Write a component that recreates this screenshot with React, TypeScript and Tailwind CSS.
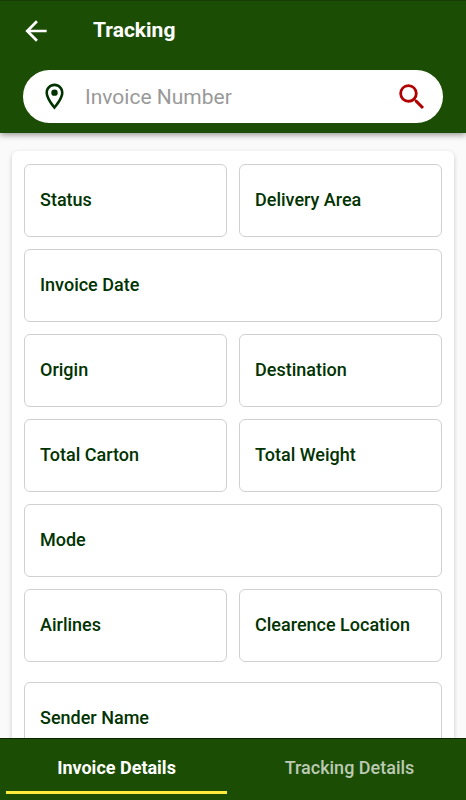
import { useState } from "react";
import { MdArrowBack, MdOutlineLocationOn, MdSearch } from "react-icons/md";

type FieldProps = {
  id: string;
  label: string;
  wide?: boolean;
};

const shipmentFields: FieldProps[] = [
  { id: "status", label: "Status" },
  { id: "delivery-area", label: "Delivery Area" },
  { id: "invoice-date", label: "Invoice Date", wide: true },
  { id: "origin", label: "Origin" },
  { id: "destination", label: "Destination" },
  { id: "total-carton", label: "Total Carton" },
  { id: "total-weight", label: "Total Weight" },
  { id: "mode", label: "Mode", wide: true },
  { id: "airlines", label: "Airlines" },
  { id: "clearence-location", label: "Clearence Location" },
];

const senderFields: FieldProps[] = [
  { id: "sender-name", label: "Sender Name", wide: true },
];

const tabs = ["Invoice Details", "Tracking Details"];

const Field = ({ id, label, wide }: FieldProps) => (
  <div
    className={`flex h-[73px] items-center rounded-md border border-[#d0d0d0] px-[15px] pb-0.5 ${
      wide ? "col-span-2" : ""
    }`}
  >
    <label
      htmlFor={id}
      className="whitespace-nowrap text-lg font-medium text-[#003300]"
    >
      {label}
    </label>
    <input
      id={id}
      type="text"
      readOnly
      className="h-full w-0 min-w-0 flex-1 bg-transparent pl-2 outline-none"
    />
  </div>
);

const App = () => {
  const [activeTab, setActiveTab] = useState(tabs[0]);

  return (
    <div className="flex h-screen flex-col bg-[#fafafa] font-[Roboto,sans-serif]">
      {/* Header */}
      <header className="z-10 border-t border-[#173c05] bg-[#1c4d04] pb-2.5 shadow-[0_2px_6px_rgba(0,0,0,0.4)]">
        <div className="flex h-[60px] items-center px-5">
          <button type="button" aria-label="Back" className="text-white">
            <MdArrowBack size={32} />
          </button>
          <h1 className="ml-[41px] text-[21px] font-bold text-white">
            Tracking
          </h1>
        </div>
        <form
          role="search"
          onSubmit={(e) => e.preventDefault()}
          className="mx-[23px] mt-[9px] flex h-[53px] items-center rounded-full bg-white pl-4 pr-3.5"
        >
          <MdOutlineLocationOn size={31} className="shrink-0 text-[#003300]" />
          <input
            type="text"
            aria-label="Invoice Number"
            placeholder="Invoice Number"
            className="ml-[15px] min-w-0 flex-1 bg-transparent pt-0.5 text-[21px] text-gray-800 outline-none placeholder:text-[#999999]"
          />
          <button
            type="submit"
            aria-label="Search"
            className="shrink-0 text-[#b00000]"
          >
            <MdSearch size={34} />
          </button>
        </form>
      </header>

      {/* Details */}
      <main className="min-h-0 flex-1 overflow-hidden px-3 pt-[18px]">
        <div className="rounded-md bg-white px-3 pb-3 pt-[13px] shadow-[0_2px_5px_rgba(0,0,0,0.2)]">
          <div className="grid grid-cols-2 gap-3">
            {shipmentFields.map((field) => (
              <Field key={field.id} {...field} />
            ))}
          </div>
          <div className="mt-5 grid grid-cols-2 gap-3">
            {senderFields.map((field) => (
              <Field key={field.id} {...field} />
            ))}
          </div>
        </div>
      </main>

      {/* Tabs */}
      <nav
        role="tablist"
        className="z-10 grid h-[62px] shrink-0 grid-cols-2 border-t border-[#0c2402] bg-[#1c4d04] px-1.5 pb-1.5"
      >
        {tabs.map((tab) => (
          <button
            key={tab}
            type="button"
            role="tab"
            aria-selected={tab === activeTab}
            onClick={() => setActiveTab(tab)}
            className={`mr-1.5 border-b-3 pt-1.5 text-lg last:ml-1.5 last:mr-0 ${
              tab === activeTab
                ? "border-[#fdec3c] font-bold text-white"
                : "border-transparent font-medium text-[#bbcab4]"
            }`}
          >
            {tab}
          </button>
        ))}
      </nav>
    </div>
  );
};

export default App;
